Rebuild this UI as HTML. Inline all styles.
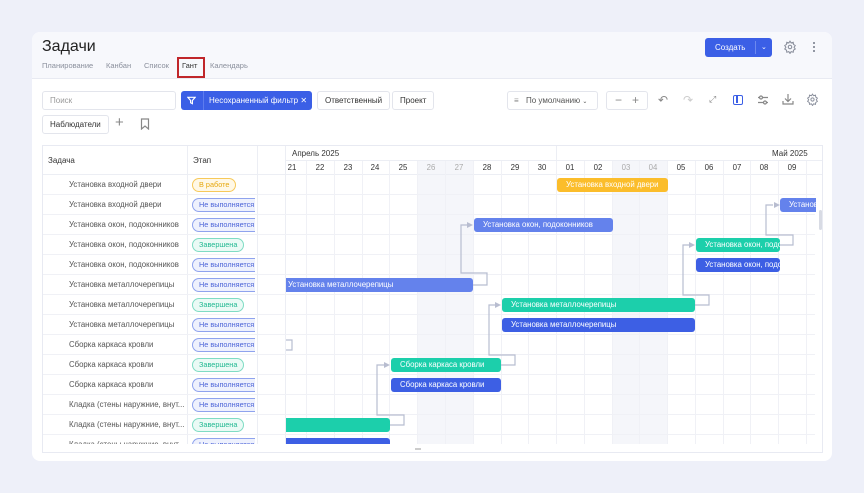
<!DOCTYPE html>
<html><head><meta charset="utf-8"><style>
*{box-sizing:border-box;margin:0;padding:0}
body{width:864px;height:493px;background:#eef0f9;font-family:"Liberation Sans",sans-serif;position:relative;overflow:hidden;color:#333}
.a{position:absolute}
.card{left:32px;top:32px;width:800px;height:429px;background:#fff;border-radius:8px;overflow:hidden}
.hdr{left:0;top:0;width:800px;height:47px;background:#f7f8fc;border-bottom:1px solid #e8eaf2}
.btn{position:absolute;height:19px;border:1px solid #e3e5ec;border-radius:3px;background:#fff;font-size:8px;color:#333;line-height:17px;padding:0 7px}
.tab{position:absolute;top:29px;font-size:7.5px;color:#8a8f9c}
.t{position:absolute;left:26px;font-size:7.8px;color:#555;line-height:20px;white-space:nowrap}
.bd{position:absolute;left:149px;height:14px;border-radius:7px;font-size:7.3px;line-height:12px;padding:0 6px;white-space:nowrap;overflow:hidden}
.bl{border:1px solid #8fa3ee;background:#eef1fd;color:#4b63d8;width:63px;border-right:none;border-radius:7px 0 0 7px}
.gr{border:1px solid #7fdcc4;background:#eafaf5;color:#20b891}
.yl{border:1px solid #f7c95a;background:#fff8e6;color:#e6a70c}
.bar{position:absolute;height:14px;border-radius:3px;color:#fff;font-size:7.8px;line-height:14px;padding-left:9px;white-space:nowrap;overflow:hidden}
.B{background:#6482ec}.D{background:#3d5fe4}.G{background:#1ccfab}.Y{background:#fbbd2b}
.dl{position:absolute;top:17px;font-size:7.8px;color:#333;text-align:center;width:28px}
</style></head><body>
<div class="a card">
 <div class="a hdr">
  <div class="a" style="left:10px;top:6px;font-size:16px;color:#222">Задачи</div>
  <div class="tab" style="left:10px">Планирование</div>
  <div class="tab" style="left:74px">Канбан</div>
  <div class="tab" style="left:112px">Список</div>
  <div class="tab" style="left:150px;color:#333">Гант</div>
  <div class="a" style="left:145px;top:25px;width:28px;height:21px;border:2px solid #c0262a"></div>
  <div class="tab" style="left:178px">Календарь</div>
  <div class="a" style="left:673px;top:6px;width:67px;height:19px;background:#3b5fe6;border-radius:3px;color:#fff;font-size:8px;line-height:19px;padding-left:10px">Создать<span style="position:absolute;left:50px;top:3px;height:13px;border-left:1px solid #6d89ee"></span><span style="position:absolute;left:56px;top:0;font-size:7px">⌄</span></div>
  <svg class="a" style="left:751px;top:8px" width="14" height="14" viewBox="0 0 24 24" fill="none" stroke="#8a8f9c" stroke-width="1.8"><circle cx="12" cy="12" r="3"/><path d="M12 2l2 3 3.5-1 .5 3.5 3 2-2 3 2 3-3 2-.5 3.5-3.5-1-2 3-2-3-3.5 1-.5-3.5-3-2 2-3-2-3 3-2 .5-3.5 3.5 1z"/></svg>
  <div class="a" style="left:781px;top:9px;width:2px;height:12px;background:radial-gradient(circle,#8a8f9c 1px,transparent 1.2px) 0 0/2px 4px"></div>
 </div>
 <div class="btn" style="left:10px;top:59px;width:134px;color:#999">Поиск</div>
 <div class="a" style="left:149px;top:59px;width:131px;height:19px;background:#3b5fe6;border-radius:3px;color:#fff;font-size:8px;line-height:19px"><svg style="position:absolute;left:6px;top:5px" width="9" height="9" viewBox="0 0 10 10" fill="none" stroke="#fff" stroke-width="1.3"><path d="M1 1.5h8L6 5v3.5L4 7.5V5z"/></svg><span style="position:absolute;left:22px;top:0;height:19px;border-left:1px solid #5d7cee"></span><span style="position:absolute;left:28px">Несохраненный фильтр ✕</span></div>
 <div class="btn" style="left:285px;top:59px">Ответственный</div>
 <div class="btn" style="left:360px;top:59px">Проект</div>
 <div class="btn" style="left:475px;top:59px;width:91px;color:#555;padding-left:18px"><span style="position:absolute;left:6px;top:0;color:#888">≡</span>По умолчанию <span style="font-size:6px">⌄</span></div>
 <div class="btn" style="left:574px;top:59px;width:42px;color:#888;font-size:12px;line-height:16px;padding-left:8px">−&nbsp;&nbsp;&nbsp;+</div>
 <div class="a" style="left:626px;top:61px;font-size:12px;color:#888">↶</div>
 <div class="a" style="left:651px;top:61px;font-size:12px;color:#ccc">↷</div>
 <div class="a" style="left:677px;top:62px;font-size:9px;color:#888">⤢</div>
 <div class="a" style="left:701px;top:63px;width:10px;height:10px;border:1.5px solid #3b5fe6;border-radius:2px"><div style="position:absolute;left:2px;top:0;width:1.5px;height:7px;background:#3b5fe6"></div></div>
 <svg class="a" style="left:725px;top:62px" width="12" height="12" viewBox="0 0 12 12" fill="none" stroke="#888" stroke-width="1.2"><path d="M1 3.5h10M1 8.5h10"/><circle cx="4" cy="3.5" r="1.5" fill="#fff"/><circle cx="8" cy="8.5" r="1.5" fill="#fff"/></svg>
 <svg class="a" style="left:750px;top:61px" width="12" height="12" viewBox="0 0 12 12" fill="none" stroke="#888" stroke-width="1.2"><path d="M6 1v7M3 5.5l3 3 3-3M1 8v3h10V8"/></svg>
 <svg class="a" style="left:774px;top:61px" width="13" height="13" viewBox="0 0 24 24" fill="none" stroke="#8a8f9c" stroke-width="1.8"><circle cx="12" cy="12" r="3"/><path d="M12 2l2 3 3.5-1 .5 3.5 3 2-2 3 2 3-3 2-.5 3.5-3.5-1-2 3-2-3-3.5 1-.5-3.5-3-2 2-3-2-3 3-2 .5-3.5 3.5 1z"/></svg>
 <div class="btn" style="left:10px;top:83px">Наблюдатели</div>
 <div class="a" style="left:83px;top:82px;font-size:15px;color:#888">+</div>
 <svg class="a" style="left:108px;top:86px" width="10" height="12" viewBox="0 0 10 12" fill="none" stroke="#888" stroke-width="1.2"><path d="M1.5 1h7v10L5 8l-3.5 3z"/></svg>
 <div class="a" style="left:10px;top:113px;width:781px;height:308px;border:1px solid #e8eaf2;overflow:hidden">
  <svg class="a" style="left:0;top:0" width="781" height="308">
   <g fill="#f5f6fa"><rect x="374" y="15" width="56" height="293"/><rect x="569" y="15" width="55" height="293"/></g>
   <g stroke="#eceef4" stroke-width="1">
    <line x1="0" y1="28.5" x2="781" y2="28.5"/>
    <line x1="243" y1="14.5" x2="781" y2="14.5"/>
    <line x1="144.5" y1="0" x2="144.5" y2="308"/><line x1="214.5" y1="0" x2="214.5" y2="308"/><line x1="242.5" y1="0" x2="242.5" y2="308"/>
    <line x1="513.5" y1="0" x2="513.5" y2="28"/>
   </g>
   <g stroke="#f0f1f6">
    <path d="M0 48.5H772M0 68.5H772M0 88.5H772M0 108.5H772M0 128.5H772M0 148.5H772M0 168.5H772M0 188.5H772M0 208.5H772M0 228.5H772M0 248.5H772M0 268.5H772M0 288.5H772"/>
    <path d="M263.5 15V308M291.5 15V308M319.5 15V308M346.5 15V308M374.5 15V308M402.5 15V308M430.5 15V308M458.5 15V308M485.5 15V308M513.5 15V308M541.5 15V308M569.5 15V308M596.5 15V308M624.5 15V308M652.5 15V308M680.5 15V308M707.5 15V308M735.5 15V308M763.5 15V308"/>
   </g>
   <g fill="none" stroke="#b8bdd0" stroke-width="1.2">
    <path d="M430 139h14v-12h-26v-48h7"/>
    <path d="M652 159h14v-10h-26v-50h7"/>
    <path d="M737 99h13v-10h-27v-30h7"/>
    <path d="M458 219h14v-10h-26v-50h7"/>
    <path d="M347 279h14v-10h-27v-50h8"/>
    <path d="M243 194h6v10h-6"/>
   </g>
   <g fill="#b8bdd0"><path d="M424 76l6 3-6 3z"/><path d="M646 96l6 3-6 3z"/><path d="M731 56l6 3-6 3z"/><path d="M452 156l6 3-6 3z"/><path d="M341 216l6 3-6 3z"/></g>
  </svg>
  <div class="a" style="left:5px;top:10px;font-size:8px;color:#333">Задача</div>
  <div class="a" style="left:150px;top:10px;font-size:8px;color:#333">Этап</div>
  <div class="a" style="left:249px;top:3px;font-size:8px;color:#333">Апрель 2025</div>
  <div class="a" style="left:729px;top:3px;font-size:8px;color:#333">Май 2025</div>
  <div class="dl" style="left:235px">21</div><div class="dl" style="left:263px">22</div><div class="dl" style="left:291px">23</div><div class="dl" style="left:318px">24</div><div class="dl" style="left:346px">25</div><div class="dl" style="left:374px;color:#aaa">26</div><div class="dl" style="left:402px;color:#aaa">27</div><div class="dl" style="left:430px">28</div><div class="dl" style="left:458px">29</div><div class="dl" style="left:485px">30</div><div class="dl" style="left:513px">01</div><div class="dl" style="left:541px">02</div><div class="dl" style="left:569px;color:#aaa">03</div><div class="dl" style="left:596px;color:#aaa">04</div><div class="dl" style="left:624px">05</div><div class="dl" style="left:652px">06</div><div class="dl" style="left:680px">07</div><div class="dl" style="left:707px">08</div><div class="dl" style="left:735px">09</div>
  <div class="t" style="top:29px">Установка входной двери</div><div class="bd yl" style="top:32px">В работе</div>
  <div class="t" style="top:49px">Установка входной двери</div><div class="bd bl" style="top:52px">Не выполняется</div>
  <div class="t" style="top:69px">Установка окон, подоконников</div><div class="bd bl" style="top:72px">Не выполняется</div>
  <div class="t" style="top:89px">Установка окон, подоконников</div><div class="bd gr" style="top:92px">Завершена</div>
  <div class="t" style="top:109px">Установка окон, подоконников</div><div class="bd bl" style="top:112px">Не выполняется</div>
  <div class="t" style="top:129px">Установка металлочерепицы</div><div class="bd bl" style="top:132px">Не выполняется</div>
  <div class="t" style="top:149px">Установка металлочерепицы</div><div class="bd gr" style="top:152px">Завершена</div>
  <div class="t" style="top:169px">Установка металлочерепицы</div><div class="bd bl" style="top:172px">Не выполняется</div>
  <div class="t" style="top:189px">Сборка каркаса кровли</div><div class="bd bl" style="top:192px">Не выполняется</div>
  <div class="t" style="top:209px">Сборка каркаса кровли</div><div class="bd gr" style="top:212px">Завершена</div>
  <div class="t" style="top:229px">Сборка каркаса кровли</div><div class="bd bl" style="top:232px">Не выполняется</div>
  <div class="t" style="top:249px">Кладка (стены наружние, внут...</div><div class="bd bl" style="top:252px">Не выполняется</div>
  <div class="t" style="top:269px">Кладка (стены наружние, внут...</div><div class="bd gr" style="top:272px">Завершена</div>
  <div class="t" style="top:289px">Кладка (стены наружние, внут...</div><div class="bd bl" style="top:292px">Не выполняется</div>
  <div class="bar Y" style="left:514px;top:32px;width:111px">Установка входной двери</div>
  <div class="bar B" style="left:737px;top:52px;width:50px">Установка окон</div>
  <div class="bar B" style="left:431px;top:72px;width:139px">Установка окон, подоконников</div>
  <div class="bar G" style="left:653px;top:92px;width:84px">Установка окон, подоконников</div>
  <div class="bar D" style="left:653px;top:112px;width:84px">Установка окон, подоконников</div>
  <div class="bar B" style="left:243px;top:132px;width:187px;padding-left:2px;border-radius:0 3px 3px 0">Установка металлочерепицы</div>
  <div class="bar G" style="left:459px;top:152px;width:193px">Установка металлочерепицы</div>
  <div class="bar D" style="left:459px;top:172px;width:193px">Установка металлочерепицы</div>
  <div class="bar G" style="left:348px;top:212px;width:110px">Сборка каркаса кровли</div>
  <div class="bar D" style="left:348px;top:232px;width:110px">Сборка каркаса кровли</div>
  <div class="bar G" style="left:243px;top:272px;width:104px;border-radius:0 3px 3px 0"></div>
  <div class="bar D" style="left:243px;top:292px;width:104px;border-radius:0 3px 3px 0"></div>
  <div class="a" style="left:773px;top:29px;width:8px;height:279px;background:#fff"></div>
  <div class="a" style="left:776px;top:64px;width:3px;height:20px;background:#d8dbe4;border-radius:2px"></div>
  <div class="a" style="left:0;top:298px;width:781px;height:10px;background:#fff"></div>
  <div class="a" style="left:372px;top:302px;width:6px;height:2px;background:#ccc"></div>
 </div>
</div>
</body></html>
